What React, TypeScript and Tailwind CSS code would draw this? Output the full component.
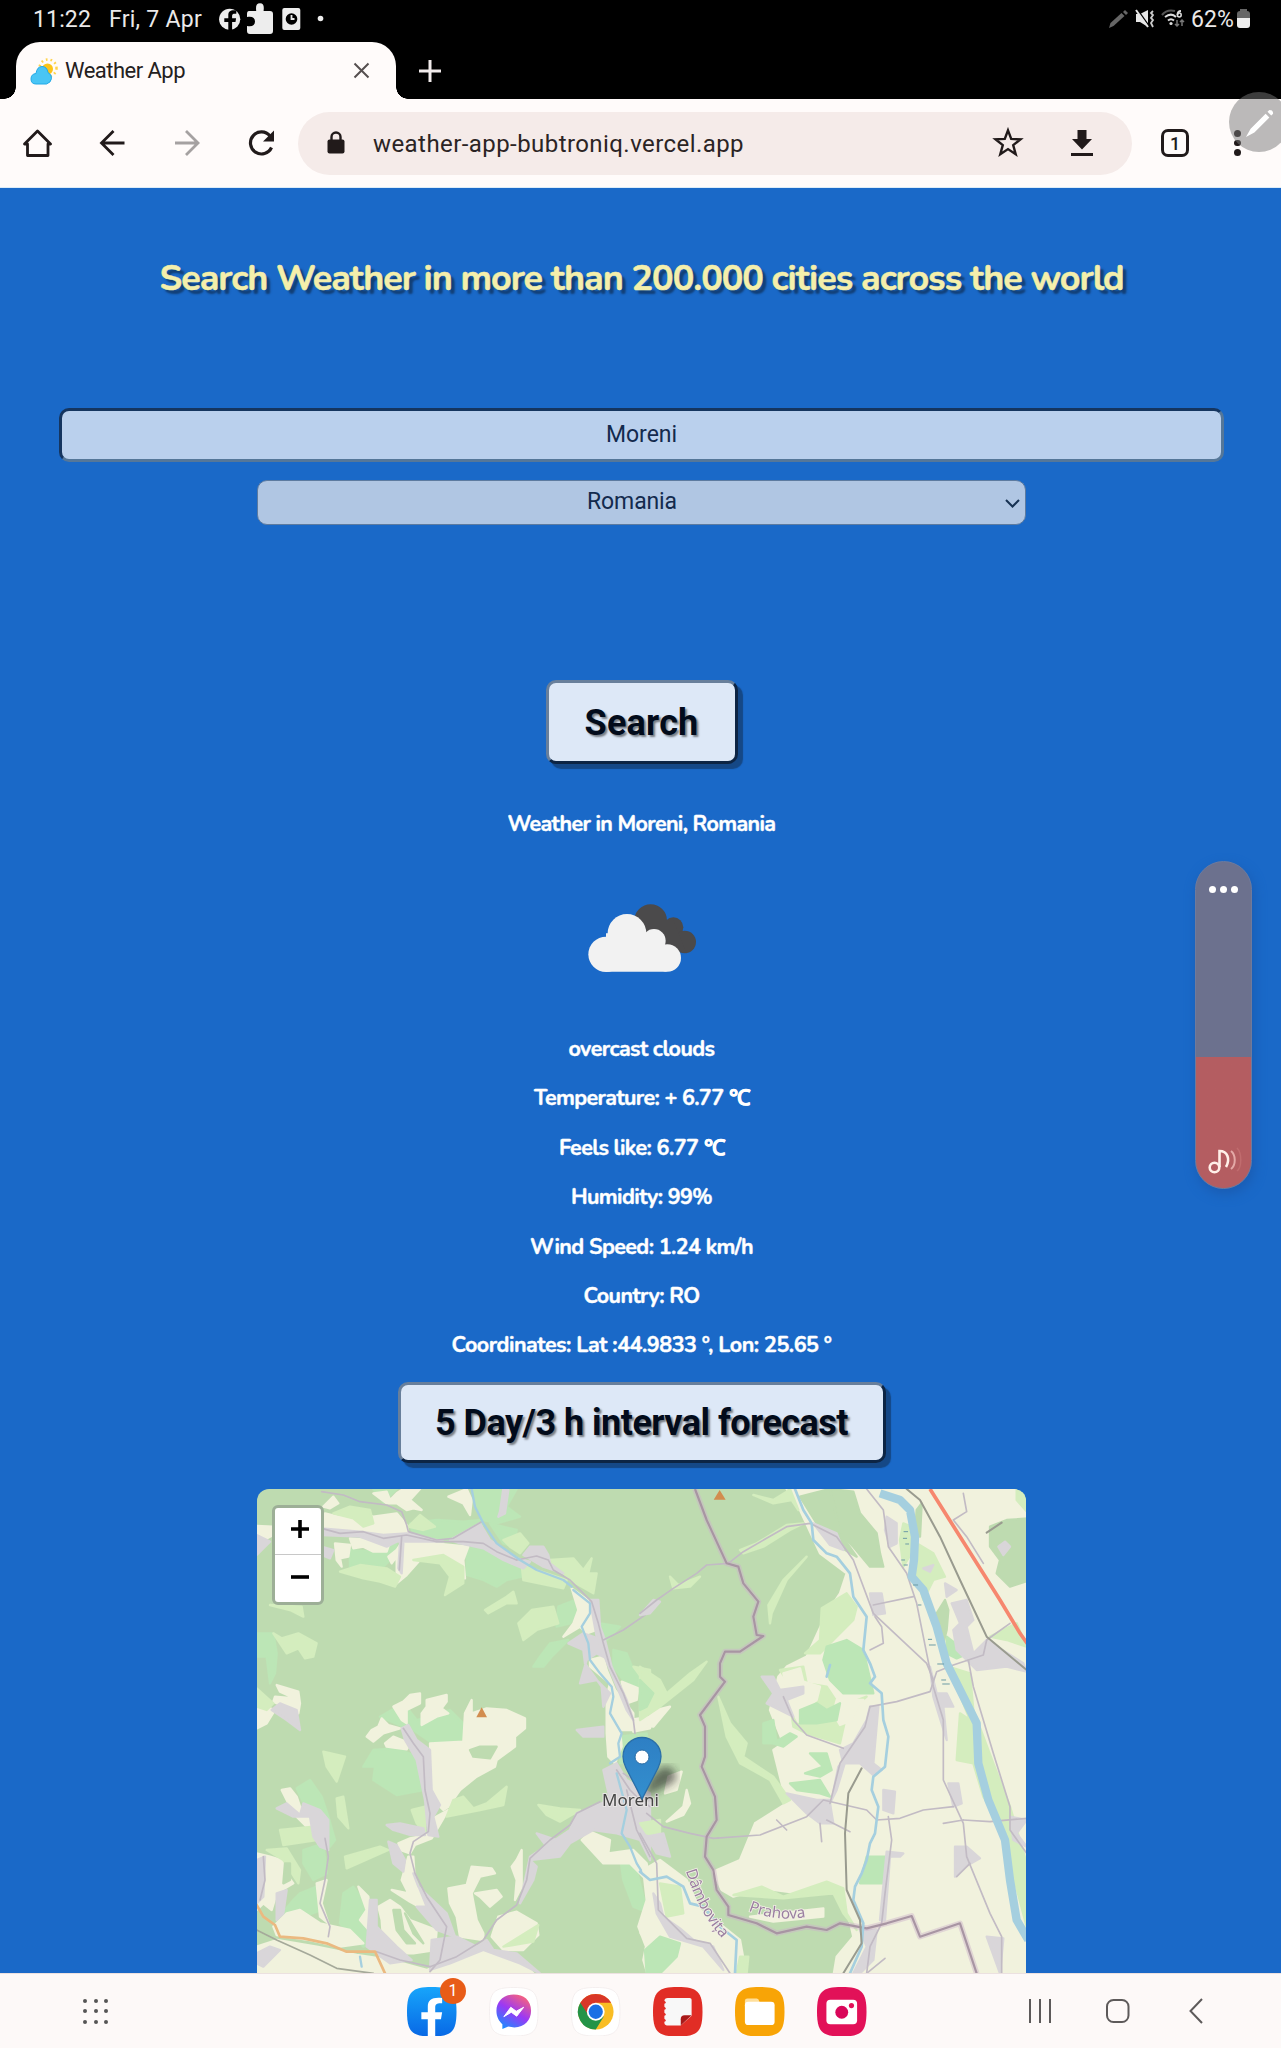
import { useLayoutEffect, useRef, useState, type ReactNode } from "react";

/* Spreads a single line of text over a given width by adjusting its letter spacing. */
function FitText({ width, text, className = "" }: { width: number; text: string; className?: string }) {
  const ref = useRef<HTMLSpanElement>(null);
  const [spacing, setSpacing] = useState(0);
  useLayoutEffect(() => {
    if (!ref.current) return;
    ref.current.style.letterSpacing = "0px";
    const natural = ref.current.getBoundingClientRect().width;
    const next = (width - natural) / text.length;
    ref.current.style.letterSpacing = `${next}px`;
    setSpacing(next);
  }, [width, text]);
  return (
    <span ref={ref} className={`inline-block whitespace-pre ${className}`} style={{ letterSpacing: `${spacing}px` }}>
      {text}
    </span>
  );
}

function StatusBar() {
  return (
    <div className="flex h-[42px] items-start bg-black pt-[4px] text-[23px] leading-[32px] text-[#ebe9e9]">
      <div className="ml-[33px] w-[76px]"><FitText width={58} text="11:22" /></div>
      <div className="w-[108px]"><FitText width={93} text="Fri, 7 Apr" /></div>
      <svg className="mt-[-4px] h-10 w-[110px]" viewBox="217 0 110 40">
        <circle cx="229.7" cy="19.3" r="10.6" fill="#ededed" />
        <path d="M228.3 30v-8h-4v-3.8h4v-3c0-4 2.5-5.4 8-4.7v3.3c-3-.2-4.2 0-4.2 2.3v2.1h4l-.6 3.8h-3.4v8z" fill="#000" />
        <path d="M249 11h7.200c-.6-5 .2-7.700 3.800-7.700s4.200 2.700 3.600 7.700H270q3 0 3 3v17q0 3-3 3h-20q-3 0-3-3v-5c5 1 8-.5 8-4.500s-3-5.500-8-4.500v-3q0-3 2-3z" fill="#ededed" />
        <rect x="282.300" y="8" width="18" height="22" rx="2" fill="#ededed" />
        <circle cx="291.500" cy="19" r="5.800" fill="#000" />
        <path d="M291.500 15v4h3" fill="none" stroke="#ededed" strokeWidth="1.800" />
        <circle cx="320.500" cy="18.500" r="2.800" fill="#ededed" />
      </svg>
      <svg className="mt-[-4px] ml-auto h-10 w-[82px]" viewBox="1106 0 82 40">
        <path d="m1109 28 1.500-5 11-10 3 3-11 10z" fill="#666" />
        <path d="m1123 12 2-2 3 3-2 2z" fill="#666" />
        <path d="M1136 14h4l8-4v17l-8-5h-4z" fill="#e6e6e6" />
        <path d="m1137 9 12 17" stroke="#000" strokeWidth="1.500" />
        <path d="m1136 10 12 17" stroke="#e6e6e6" strokeWidth="2" />
        <path d="M1153 11l-2 2 2 2-2 3 2 2-2 3 2 4" fill="none" stroke="#ccc" strokeWidth="1.800" />
        <path d="M1162 15c4-5 9-5 13-4" fill="none" stroke="#555" strokeWidth="2.200" />
        <path d="M1165 17c4-3 8-3 11 0M1168 20.500c2-1.700 4-1.700 6 0" fill="none" stroke="#ddd" strokeWidth="2" />
        <circle cx="1171" cy="23.500" r="1.600" fill="#ddd" />
        <path d="M1181 11c-3 0-3.500 1.500-3.500 4" fill="none" stroke="#ddd" strokeWidth="1.800" />
        <circle cx="1179.300" cy="15" r="1.900" fill="none" stroke="#ddd" strokeWidth="1.500" />
        <path d="M1177 20v6m-2-2 2 2 2-2M1182 26v-6m-2 2 2-2 2 2" fill="none" stroke="#777" strokeWidth="1.500" />
      </svg>
      <div className="ml-[3px] w-[46px]"><FitText width={43} text="62%" /></div>
      <div className="mt-[5px] mr-[31px] flex w-[13px] flex-col items-center">
        <div className="h-[2px] w-[7px] bg-[#666]" />
        <div className="h-[17px] w-full rounded-[3px] bg-linear-to-b from-[#666] from-40% to-[#eee] to-40%" />
      </div>
    </div>
  );
}

function TabStrip() {
  return (
    <div className="flex h-[57px] bg-black">
      <div className="relative ml-[16px] flex w-[380px] items-center rounded-t-[24px] bg-[#fffbfa] pl-[14px]">
        <div className="absolute bottom-0 -left-[12px] size-[12px] bg-[radial-gradient(circle_at_0_0,#000_11.5px,#fffbfa_12px)]" />
        <div className="absolute -right-[12px] bottom-0 size-[12px] bg-[radial-gradient(circle_at_100%_0,#000_11.5px,#fffbfa_12px)]" />
        <svg className="size-[28px]" viewBox="30 56 28 28">
          <circle cx="48" cy="67" r="8.500" fill="none" stroke="#ffd34d" strokeWidth="2.500" strokeDasharray="1.700 3" />
          <circle cx="47.500" cy="68" r="5.500" fill="#fcc419" />
          <path d="M36 83q-5 0-5-5t5-5.500q1-7 6-7t6 6q4 2 3.500 6t-5 5.500z" fill="#49c5f5" stroke="#22a9e6" strokeWidth="1" />
        </svg>
        <div className="mt-[1px] ml-[7px] text-[22px] leading-none text-[#242020]"><FitText width={120} text="Weather App" /></div>
        <svg className="ml-auto mr-[26px] size-[17px]" viewBox="0 0 17 17"><path d="m1.500 1.500 14 14m0-14-14 14" stroke="#564f4f" strokeWidth="2" /></svg>
      </div>
      <svg className="mt-[17px] ml-[22px] size-[24px]" viewBox="0 0 24 24"><path d="M12 1v22M1 12h22" stroke="#f2ecec" strokeWidth="3" /></svg>
    </div>
  );
}

const ink = "#211a1a";

function Toolbar() {
  return (
    <div className="flex h-[89px] items-center border-b border-[#dcecf8] bg-[#fffbfa]">
      <svg className="ml-[22px] size-[30px]" viewBox="22 128 30 30"><path d="M24.500 144 37.500 131 50.500 144H48v11.500H27.500V144z" fill="none" stroke={ink} strokeWidth="2.800" strokeLinejoin="round" /></svg>
      <svg className="ml-[45px] size-[30px]" viewBox="97 128 30 30"><path d="M124.500 143H102m11.500-12-12 12 12 12" fill="none" stroke={ink} strokeWidth="2.800" /></svg>
      <svg className="ml-[45px] size-[30px]" viewBox="172 128 30 30"><path d="M175 143h22.500m-11.500-12 12 12-12 12" fill="none" stroke="#a5a1a1" strokeWidth="2.800" /></svg>
      <svg className="ml-[44px] size-[30px]" viewBox="246 128 30 30"><path d="M271.500 147.500a11 11 0 1 1-1.500-11.500" fill="none" stroke={ink} strokeWidth="3.200" /><path d="M274 130.500v11h-11z" fill={ink} /></svg>
      <div className="ml-[22px] flex h-[63px] w-[834px] items-center rounded-full bg-[#f5ebe9]">
        <svg className="ml-[28px] h-[24px] w-[20px]" viewBox="0 0 20 24"><rect x="1.500" y="8.500" width="17" height="14" rx="2" fill={ink} /><path d="M5.500 9V6a4.500 4.500 0 0 1 9 0v3" fill="none" stroke={ink} strokeWidth="2.400" /></svg>
        <div className="mt-[1px] ml-[27px] text-[24px] leading-none text-[#2b2424]"><FitText width={371} text="weather-app-bubtroniq.vercel.app" /></div>
        <svg className="mr-[47px] ml-auto size-[32px]" viewBox="0 0 32 32"><path d="m16 3.300 3.200 8.600 9.300.4-7.300 5.800 2.500 9.200-7.700-5.200-7.700 5.200 2.500-9.200-7.300-5.800 9.300-.4z" fill="none" stroke={ink} strokeWidth="2.400" /></svg>
        <svg className="mr-[39px] h-[28px] w-[22px]" viewBox="0 0 22 28"><path d="M6.500 1h9v9H21L11 20.500 1 10h5.500z" fill={ink} /><path d="M0 25.500h22" stroke={ink} strokeWidth="3" /></svg>
      </div>
      <div className="ml-[29px] flex size-[28px] items-center justify-center rounded-[7px] border-3 border-[#211a1a] text-[18px] font-medium text-[#211a1a]">1</div>
      <div className="ml-[45px] flex flex-col gap-[3px]">
        <i className="size-[6.5px] rounded-full bg-[#211a1a]" />
        <i className="size-[6.5px] rounded-full bg-[#211a1a]" />
        <i className="size-[6.5px] rounded-full bg-[#211a1a]" />
      </div>
    </div>
  );
}

const FOREST = "#bedbb0";
const FIELD = "#f1f2dd";
const GRASS = "#d4edbe";
const SCRUB = "#bce6b6";
const TOWN = "#d9d6d9";
const ROAD = "#c2bbc4";
const RIVER = "#a5cfdf";

function Shapes({ fill, list }: { fill: string; list: string[] }) {
  return <>{list.map((d) => <path key={d} d={d} fill={fill} stroke={fill} strokeWidth="7" strokeLinejoin="round" />)}</>;
}
function Lines({ stroke, w, list }: { stroke: string; w: number; list: string[] }) {
  return <>{list.map((d) => <path key={d} d={d} fill="none" stroke={stroke} strokeWidth={w} strokeLinejoin="round" strokeLinecap="round" />)}</>;
}

function WesternHalf() {
  return (
    <g transform="translate(250 1480) scale(.333333)">
      <Shapes fill={SCRUB} list={[
        "M370 27h70l-40 40z",
        "M480 130 560 120 640 125 690 120 700 135 600 180 490 165Z",
        "M670 27 800 27 770 80 810 110 740 130 700 120 675 80Z",
        "M720 130 800 150 790 200 760 190Z",
        "M650 205 720 200 815 255 815 290 770 300 740 320 700 300 650 285Z",
        "M300 210 370 215 440 190 430 230 400 260 350 250 300 260Z",
        "M925 380 975 360 985 390 960 430 920 440Z",
        "M955 480 900 490 870 530 850 560 880 560 905 530Z",
        "M1050 430 1110 440 1070 480Z",
        "M1090 510 1130 520 1150 570 1200 580 1200 660 1160 620 1120 600 1090 560Z",
        "M20 460 70 460 80 520 75 580 60 610 50 530 20 530Z",
        "M390 710 460 670 500 720 600 690 640 730 640 785 540 785 490 750 460 740Z",
        "M370 810 440 805 500 830 520 850 520 930 440 945 370 900 375 860 340 860Z",
        "M140 925 180 900 215 950 235 1010 255 1080 240 1100 210 1030 170 990Z",
        "M160 1110 220 1090 230 1180 190 1200 160 1150Z",
        "M150 1240 200 1220 215 1290 160 1310 100 1330 80 1320 130 1260Z",
        "M280 1240 310 1220 345 1270 345 1340 370 1390 340 1400 270 1330Z",
        "M1110 770 1190 760 1200 830 1110 850Z",
        "M1110 1130 1155 1150 1180 1250 1200 1300 1150 1280 1120 1200Z",
      ]} />
      <Shapes fill={FIELD} list={[
        "M220 80 250 50 265 70 240 85Z",
        "M370 40 410 35 420 60 440 40 460 27 510 27 480 60 515 90 490 85 470 90 440 70 410 70Z",
        "M595 50 650 27 665 60 660 105 640 70Z",
        "M215 150 225 100 265 110 310 95 370 110 440 100 470 135 475 160 430 170 350 160 280 150Z",
        "M20 138 68 140 70 165 50 175 20 170Z",
        "M255 190 300 195 295 230 270 235 275 260 260 240Z",
        "M300 175 420 185 410 215 370 215 340 200 310 205Z",
        "M460 180 600 195 655 200 640 240 645 295 625 295 615 250 560 235 510 240 470 285 440 310 440 230 425 250 415 230 440 210Z",
        "M965 325 1020 365 1025 400 1040 450 1010 460 990 440 940 470 970 430 985 390Z",
        "M1020 540 1060 530 1070 570 1095 630 1150 700 1150 750 1110 750 1115 800 1095 850 1075 830 1070 760 1070 650 1080 610 1020 560Z",
        "M1115 605 1165 625 1160 660 1130 670Z",
        "M80 615 145 635 150 670 145 700 70 665 75 650 135 655 90 635Z",
        "M20 670 75 690 50 730 20 745Z",
        "M350 770 365 750 385 740 395 715 415 735 450 745 400 760 370 785Z",
        "M405 790 430 770 480 790 470 808 410 800Z",
        "M430 680 460 665 480 645 510 640 510 670 470 690 470 730 455 720Z",
        "M515 700 530 680 530 660 590 645 590 665 575 685 595 700 560 710 515 735Z",
        "M540 790 640 785 645 700 665 660 665 700 710 685 770 690 825 715 825 745 795 770 795 800 740 840 735 860 680 890 630 930 595 980 580 990 560 970 545 925Z",
        "M95 930 120 925 140 950 150 980 190 1020 220 1075 205 1090 190 1060 130 1000Z",
        "M445 1090 480 1075 530 1065 550 1015 595 990 545 1075 495 1095 480 1120 450 1110Z",
        "M425 1230 475 1240 455 1200 475 1130 490 1130 495 1210 535 1275 525 1290 480 1265Z",
        "M20 1120 60 1130 95 1140 110 1145 115 1190 130 1210 80 1240 65 1290 40 1270 20 1290Z",
        "M110 1300 150 1290 210 1330 300 1350 340 1390 270 1400 180 1380 80 1365 70 1340Z",
        "M200 1210 230 1200 215 1270 235 1330 210 1310Z",
        "M325 1220 355 1250 365 1360 330 1320 350 1290Z",
        "M385 1280 420 1260 450 1280 480 1320 560 1350 555 1410 490 1420 440 1420 400 1390 395 1320Z",
        "M595 1225 650 1215 665 1160 725 1165 735 1180 690 1190 665 1240 680 1320 700 1360 700 1380 630 1370 620 1310 600 1270Z",
        "M675 1240 740 1230 755 1250 720 1280 690 1250Z",
        "M800 1140 815 1110 815 1220 795 1260 800 1200 785 1160Z",
        "M725 1370 745 1310 800 1295 860 1330 865 1365 820 1410 760 1410Z",
        "M20 1400 80 1380 200 1400 320 1425 420 1440 530 1470 600 1440 700 1410 800 1430 850 1480 20 1480Z",
        "M995 1080 1020 1055 1080 1080 1075 1120 1150 1110 1190 1150 1200 1210 1140 1150 1060 1150Z",
        "M1200 1200 1198 1260 1170 1330 1172 1360 1200 1400Z",
        "M1140 720 1200 710 1200 745 1150 755Z",
      ]} />
      <Shapes fill={GRASS} list={[
        "M250 100 300 80 360 90 370 130 340 140 310 115Z",
        "M475 140 510 105 555 140 520 150Z",
        "M760 180 810 160 835 190 810 220 780 200Z",
        "M270 275 330 255 410 265 450 290 435 320 390 305 340 295Z",
        "M490 240 580 225 640 260 640 310 585 345 600 290 570 250Z",
        "M815 255 950 300 940 325 820 300Z",
        "M900 240 970 235 1000 270 1025 235 1015 280 1040 280 1030 340 960 300Z",
        "M705 390 770 350 790 335 800 370 770 370 715 400Z",
        "M805 430 845 390 910 380 925 430 860 450 820 480Z",
        "M70 460 95 475 145 460 200 490 190 530 165 535 145 505 110 520Z",
        "M60 375 155 380 160 410 120 390Z",
        "M220 815 285 830 260 905 230 860Z",
        "M260 955 280 950 295 1045 265 1010Z",
        "M90 1050 190 1040 200 1080 100 1095Z",
        "M50 1110 110 1105 150 1170 145 1210 100 1140Z",
        "M285 1130 390 1100 415 1110 290 1165Z",
        "M485 990 525 980 525 1060 500 1030Z",
        "M590 1010 610 960 640 950 670 985 710 970 770 920 760 975 690 990Z",
        "M865 975 930 985 990 990 930 1025 890 1005Z",
        "M760 1400 865 1335 850 1385Z",
        "M20 625 70 670 50 690 20 680Z",
        "M1150 560 1200 570 1200 630 1180 600Z",
        "M1170 1040 1200 1020 1200 1070Z",
      ]} />
      <Shapes fill={FOREST} list={[
        "M660 810 690 800 740 800 720 835 670 830Z",
        "M430 1290 450 1290 460 1350 495 1390 470 1390 440 1350Z",
        "M465 1300 520 1390 490 1360Z",
        "M105 1150 120 1150 120 1200 100 1210Z",
      ]} />
      <Shapes fill={TOWN} list={[
        "M20 165 60 185 20 225Z",
        "M215 145 330 155 400 165 470 160 580 185 440 185 410 200 330 170 215 165Z",
        "M215 200 250 210 240 235 215 225Z",
        "M450 190 460 190 455 280 445 265Z",
        "M600 180 690 130 720 180 800 235 840 245 820 265 760 240 700 205 630 190Z",
        "M750 95 760 27 775 30 765 100 745 110Z",
        "M820 225 840 200 880 200 895 225 900 250 940 280 880 260Z",
        "M955 490 1000 460 1060 480 1080 540 1040 520 1010 540 990 610 1040 600 1080 640 1060 680 1055 620 1005 550 1000 510Z",
        "M1020 360 1045 360 1050 440 1065 480 1085 560 1130 660 1150 720 1130 690 1080 570 1040 470Z",
        "M65 690 90 670 140 690 150 750 110 720Z",
        "M455 745 475 735 500 780 540 810 545 930 570 975 550 1010 565 1070 535 1065 525 960 500 840 465 780Z",
        "M410 1035 450 1030 520 1045 525 1065 480 1065 430 1050Z",
        "M415 1085 440 1095 465 1140 460 1175 430 1150Z",
        "M490 1180 505 1220 590 1300 615 1370 560 1350 500 1280 530 1280Z",
        "M80 985 110 970 150 1005 160 970 210 990 235 1020 235 1110 210 1100 190 1070 180 1010 130 1010Z",
        "M80 1240 110 1230 100 1300 80 1320Z",
        "M360 1260 380 1260 380 1340 440 1400 485 1440 420 1450 350 1400Z",
        "M20 1140 45 1130 40 1250 20 1270Z",
        "M545 1380 620 1370 680 1400 710 1380 730 1410 800 1420 870 1480 810 1450 700 1410 600 1450 540 1470Z",
        "M980 750 1060 740 1060 770 1000 770Z",
        "M1060 870 1100 850 1130 900 1200 940 1200 1140 1170 1080 1100 1060 1030 1050 960 1090 930 1130 840 1140 860 1160 850 1200 810 1270 840 1130 960 1050 980 1000 1080 960Z",
        "M860 1060 920 1080 890 1100Z",
        "M20 1420 60 1400 90 1410 40 1460 20 1450Z",
      ]} />
      <Lines stroke={ROAD} w={5} list={[
        "M215 35 280 45 330 65 410 75 455 95 470 135 475 155 560 180 610 175 695 125",
        "M215 145 270 160 340 155 400 175 470 165 560 185 640 185 700 190 740 215 800 240",
        "M455 170 448 270",
        "M800 240 860 228 895 240 910 270 960 300 1025 365 1045 430 1060 490 1080 560 1120 640 1150 720 1155 760",
        "M1060 480 1120 450 1200 395",
        "M460 745 490 790 520 830 525 930 540 1000 535 1055 490 1085 480 1120 495 1180 530 1250 590 1340 570 1440 540 1475",
        "M540 1460 620 1430 700 1380 740 1320 800 1275 830 1200 840 1135 900 1080 960 1035 980 1000 1050 965",
        "M225 1075 235 1130 225 1200 210 1270 240 1340 235 1370",
        "M380 1415 450 1440 540 1460",
        "M40 1130 45 1200 30 1260",
        "M1130 930 1160 1050 1200 1130",
        "M1100 870 1140 930 1170 960 1200 980",
        "M1120 880 1150 900 1170 950",
      ]} />
      <Lines stroke={RIVER} w={7} list={[
        "M665 27 675 80 700 130 740 190 810 240 860 270 940 300 965 320",
        "M970 330 1020 370 1020 400 995 440 1015 490 1020 540 1050 580 1085 620 1090 650 1080 700 1115 760 1105 790 1110 830 1080 850",
        "M1100 880 1130 990 1115 1060 1140 1100 1160 1150 1185 1190 1200 1200",
        "M330 1430 335 1460",
      ]} />
      <Lines stroke="#ebb980" w={8} list={["M20 1275 40 1310 75 1335 90 1370 160 1375 230 1390 290 1415 375 1415 405 1480"]} />
      <Lines stroke="#a5a99a" w={5} list={["M20 1350 80 1380 180 1425 260 1465 370 1480"]} />
      <path d="m695 682 16 30h-32z" fill="#d28d50" />
    </g>
  );
}

const BORDER = "M165 27 200 120 260 250 295 260 310 310 355 365 340 410 350 465 370 468 300 515 255 515 240 550 240 590 255 605 180 705 195 740 195 830 185 860 225 950 230 1020 200 1070 195 1130 220 1170 230 1230 265 1280 265 1305 350 1330 410 1360 500 1340 560 1350 600 1330 680 1345 740 1330 815 1308 840 1370 960 1330 1010 1480";

function EasternHalf() {
  return (
    <g transform="translate(640 1480) scale(.333333)">
      <Shapes fill={FIELD} list={[
        "M440 27 1170 27 1170 1490 580 1490 590 1430 640 1370 610 1240 480 1240 365 1225 280 1250 245 1230 220 1175 300 1140 345 1030 440 970 420 890 400 810 430 790 390 690 415 590 440 560 500 530 560 400 600 340 620 280 540 220 480 90Z",
        "M10 1170 60 1140 140 1200 180 1290 250 1340 300 1380 320 1490 25 1490 10 1440 18 1400 -5 1340 20 1260Z",
        "M0 735 50 690 90 680 40 740Z",
        "M80 1025 130 980 140 930 150 970 130 1005Z",
        "M330 1310 550 1285 550 1310 400 1325Z",
        "M75 940 85 890 125 875 110 930Z",
      ]} />
      <Shapes fill={GRASS} list={[
        "M340 45 400 60 440 35 450 27 475 90 455 60 400 70Z",
        "M545 385 620 340 650 380 640 420 590 470 540 520 495 520 540 480Z",
        "M0 560 60 600 80 640 150 580 200 545 160 600 60 680 0 720Z",
        "M235 650 270 730 320 790 310 830 400 890 450 960 430 970 390 900 300 850 260 770Z",
        "M385 375 430 300 500 230 440 300 395 400 390 430Z",
        "M90 290 115 315 180 290 150 320 100 325Z",
        "M300 210 350 190 440 135 490 130 450 150 370 200 310 220Z",
        "M830 190 880 220 915 290 880 300 850 360 830 290Z",
        "M420 570 490 560 500 610 560 620 600 680 680 650 620 700 600 790 500 760 460 740 440 600Z",
        "M925 560 990 580 1000 690 1060 850 1110 980 1160 1150 1160 1340 1110 1150 1080 1030 1030 950 1000 850 950 840 960 700 990 720Z",
        "M280 1245 365 1220 430 1250 560 1205 610 1225 620 1300 650 1350 610 1300 580 1240 430 1255Z",
        "M1050 470 1130 430 1160 500 1100 480Z",
        "M790 130 815 140 820 210 790 260 780 180Z",
        "M60 1210 120 1220 130 1300 80 1310Z",
        "M0 1030 60 1020 60 1070 20 1060Z",
        "M300 1430 325 1430 320 1480 290 1480Z",
        "M530 980 570 970 570 1010 530 1010Z",
      ]} />
      <Shapes fill={FIELD} list={[
        "M430 580 480 565 490 605 540 620 530 660 490 690 475 725 450 680Z",
        "M590 660 670 660 640 720 600 735 580 700Z",
      ]} />
      <Shapes fill={SCRUB} list={[
        "M0 600 40 640 20 680 0 690Z",
        "M560 500 620 480 670 510 700 640 610 640 570 600 550 540Z",
        "M480 690 530 670 560 690 600 670 590 720 530 730 480 730Z",
        "M370 730 400 720 410 790 370 790Z",
        "M470 770 430 800 400 790 450 760Z",
        "M510 820 560 820 575 870 540 890 495 880 550 860Z",
        "M450 910 540 900 570 950 540 940 470 930Z",
        "M660 1210 680 1130 740 1130 730 1210Z",
        "M15 1410 60 1370 120 1390 110 1430 60 1480 20 1480Z",
        "M920 470 985 520 950 535 920 520Z",
      ]} />
      <Shapes fill={FOREST} list={[
        "M570 27 640 35 660 100 710 160 720 220 730 260 690 260 640 200 600 160 590 100Z",
        "M480 50 570 27 600 160 650 230 590 195 530 130Z",
        "M1050 200 1050 140 1100 120 1170 115 1170 300 1110 320 1070 280 1080 240Z",
        "M830 90 845 70 840 170 825 160Z",
        "M915 360 925 390 920 450 910 490 890 400Z",
      ]} />
      <Shapes fill={GRASS} list={["M1130 27 1165 27 1165 100 1130 60Z"]} />
      <Shapes fill={TOWN} list={[
        "M365 590 400 590 420 630 490 620 490 640 440 660 460 710 400 680 380 670 400 640Z",
        "M520 130 590 160 610 210 570 195Z",
        "M740 110 770 130 770 190 750 200 735 150Z",
        "M690 340 725 340 735 400 700 405Z",
        "M850 265 880 255 870 275Z",
        "M935 370 980 360 1000 420 980 440 1000 520 1040 480 1150 550 1160 575 1100 560 1010 570 950 510 940 450 960 430Z",
        "M915 310 950 330 920 350Z",
        "M1075 200 1095 185 1110 200 1090 225Z",
        "M690 680 715 680 700 850 725 870 700 885 660 850 610 850 600 810 640 790 680 720Z",
        "M595 860 620 830 590 930 570 970 580 1030 540 1030 500 1000 440 940 530 960 575 960Z",
        "M730 930 765 935 760 1000 730 990Z",
        "M870 560 890 640 920 640 940 680 910 680 920 780 880 650Z",
        "M925 910 955 910 965 970 940 980Z",
        "M945 1100 980 1100 1020 1135 975 1160 945 1190Z",
        "M740 1115 790 1120 780 1130 750 1130 735 1320 720 1320Z",
        "M20 1070 70 1060 90 1130 50 1120Z",
        "M40 1240 60 1270 70 1310 120 1345 160 1380 220 1400 250 1470 190 1400 90 1370 50 1300Z",
        "M1110 1010 1160 1020 1130 1060 1160 1100 1120 1080Z",
        "M1040 1370 1090 1375 1080 1480Z",
        "M660 1350 710 1350 700 1440 660 1480 640 1480 680 1400Z",
        "M0 405 40 360 60 365 30 400Z",
      ]} />
      <Lines stroke={ROAD} w={5} list={[
        "M0 400 50 360 100 325 170 280 200 255 265 250 310 215 440 140 510 130 590 170 640 240 700 400 860 550 880 600",
        "M680 27 730 90 745 200 800 280 830 370 860 520 880 620 910 720 910 900 970 1030 980 1130 1050 1300 1085 1370 1085 1480",
        "M700 375 820 350",
        "M705 410 725 440 730 490 690 510",
        "M690 680 770 665 870 635 890 575 940 555 1030 525 1040 480 1110 430",
        "M690 680 675 740 600 850 570 970",
        "M430 650 460 720 500 765 610 805",
        "M20 1000 70 1040 150 1060 220 1075 360 1065 500 1010 550 960 680 990 710 1020 780 1015 850 990 940 980",
        "M745 1010 755 1080 735 1240 725 1330 690 1400 680 1480",
        "M970 1020 1050 1025 1160 1015",
        "M985 540 1000 620 1060 820 1110 980 1110 1050 1160 1120",
        "M0 1060 50 1150 55 1290 140 1375 210 1390 270 1480",
        "M970 40 980 95 940 120 980 170 1030 250",
        "M410 1020 440 1050M540 1030 545 1085M560 1020 630 1055",
        "M910 1030 970 1020M950 1190 990 1150M680 1480 735 1435",
      ]} />
      <path d={BORDER} fill="none" stroke="#cdb2c9" strokeOpacity=".45" strokeWidth="17" strokeLinejoin="round" />
      <path d={BORDER} fill="none" stroke="#a895a3" strokeWidth="6.500" strokeLinejoin="round" />
      <Lines stroke={RIVER} w={8} list={[
        "M465 27 490 90 515 130 520 180 560 220 590 230 630 280 640 350 680 410 670 510 690 550 705 590 690 610 725 640 730 720 745 770 735 860 700 890 695 930 715 980 705 1060 690 1090 680 1140 665 1180 645 1220 640 1260 670 1330 665 1400 630 1480",
        "M0 1175 30 1200 80 1190 130 1220 150 1270 190 1280 240 1340 290 1380 285 1480",
        "M560 590 570 555",
      ]} />
      <path d="M720 40 780 60 810 90 825 170 822 240 815 290 850 330 890 440 920 550 970 650 1010 730 1015 850 1045 960 1095 1080 1110 1200 1130 1320 1165 1380" fill="none" stroke={RIVER} strokeWidth="25" strokeLinejoin="round" />
      <Lines stroke="#6b9ba5" w={3} list={["M792 155h11M790 175h10M797 192h9M785 240h9M792 255h10M820 315h13M835 375h8M865 478h10M868 495h18M893 552h18M905 600h12M908 612h20"]} />
      <Lines stroke="#999b8f" w={6} list={[
        "M800 27 840 60 900 170 960 300 1040 470 1160 570",
        "M665 865 625 940 615 1060 620 1230 660 1320 665 1390 610 1480",
        "M1040 158 1085 128",
      ]} />
      <path d="M870 27 1080 360 1140 460 1165 495" fill="none" stroke="#f6876e" strokeWidth="11" />
      <path d="m239 30 18 29h-36z" fill="#d28d50" />
      <path id="west-county" d="M137 1172C165 1260 190 1310 250 1380" fill="none" />
      <path id="east-county" d="M325 1292Q420 1330 515 1308" fill="none" />
      <g fill="#9a7fa0" stroke="#f2f0e5" strokeWidth="5" paintOrder="stroke" fontSize="46" fontFamily="Noto Sans, sans-serif">
        <text textLength="232"><textPath href="#west-county">Dâmbovița</textPath></text>
        <text textLength="176"><textPath href="#east-county">Prahova</textPath></text>
      </g>
    </g>
  );
}

function WeatherMap() {
  return (
    <div className="relative mt-[26px] h-[484px] w-[769px] overflow-hidden rounded-t-[12px]">
      <svg className="block size-full" viewBox="257 1489 769 484">
        <defs>
          <linearGradient id="pin" x2="0" y2="1"><stop stopColor="#2e7fc4" /><stop offset="1" stopColor="#338fce" /></linearGradient>
          <filter id="soft"><feGaussianBlur stdDeviation="4" /></filter>
          <filter id="tiles"><feGaussianBlur stdDeviation="0.6" /></filter>
        </defs>
        <rect x="257" y="1489" width="769" height="484" fill={FOREST} />
        <g filter="url(#tiles)">
          <WesternHalf />
          <EasternHalf />
          <text x="602" y="1806" textLength="57" fontSize="17" fontFamily="Noto Sans, sans-serif" fill="#444" stroke="#e8e5e5" strokeWidth="2" paintOrder="stroke">Moreni</text>
        </g>
        <path d="M643 1798 650 1779Q664 1760 673 1770T666 1786Z" fill="#222" opacity=".6" filter="url(#soft)" />
        <path d="M642 1799 626 1768Q623 1762 623 1756.500A19 19 0 0 1 661 1756.500Q661 1762 658 1768Z" fill="url(#pin)" stroke="#2a6ea8" strokeWidth="1.300" />
        <circle cx="642" cy="1757" r="7" fill="#fff" stroke="#286ba4" strokeWidth="1" />
      </svg>
      <div className="absolute top-[16px] left-[15px] flex h-[100px] w-[52px] flex-col rounded-[6px] border-[3px] border-[#9daf97] bg-white">
        <div className="flex flex-1 items-center justify-center border-b border-[#c8c8c8]"><svg className="mb-[3px] ml-[4px] size-[18px]" viewBox="0 0 18 18"><path d="M9 0v18M0 9h18" stroke="#000" strokeWidth="3.600" /></svg></div>
        <div className="flex flex-1 items-center justify-center"><svg className="mb-[3px] ml-[4px] size-[18px]" viewBox="0 0 18 18"><path d="M0 9h18" stroke="#000" strokeWidth="3.600" /></svg></div>
      </div>
    </div>
  );
}

const readings = [
  { text: "overcast clouds", width: 146 },
  { text: "Temperature: + 6.77 ℃", width: 215 },
  { text: "Feels like: 6.77 ℃", width: 165 },
  { text: "Humidity: 99%", width: 141 },
  { text: "Wind Speed: 1.24 km/h", width: 223 },
  { text: "Country: RO", width: 116 },
  { text: "Coordinates: Lat :44.9833 °, Lon: 25.65 °", width: 380 },
];

function PushButton({ children, className }: { children: ReactNode; className: string }) {
  return (
    <button className={`rounded-[10px] border-[3px] border-t-[#687f9b] border-r-[#0d2544] border-b-[#0d2544] border-l-[#687f9b] bg-[#dde8f7] pt-[2px] text-[36px] leading-none font-bold text-[#020b1b] shadow-[5px_5px_1px_#154886] [text-shadow:2px_2px_2px_#0007] ${className}`}>
      {children}
    </button>
  );
}

function WeatherPage() {
  return (
    <main className="flex h-[1785px] flex-col items-center overflow-hidden bg-[#1a69c8] pl-[2px]">
      <h1 className="mt-[67px] h-[48px] font-[Nunito,Lato,sans-serif] text-[36px] leading-[48px] font-bold text-[#f4efab] [-webkit-text-stroke:0.5px_#f4efab] [text-shadow:4px_4px_2px_#123f76]">
        <FitText width={964} text="Search Weather in more than 200.000 cities across the world" />
      </h1>
      <div className="mt-[105px] flex h-[54px] w-[1165px] items-center justify-center rounded-[10px] border-[3px] border-t-[#15355f] border-r-[#557799] border-b-[#557799] border-l-[#15355f] bg-[#bad0ed] text-[23px] text-[#132a4d]">
        <FitText width={71} text="Moreni" />
      </div>
      <div className="relative mt-[18px] flex h-[45px] w-[769px] items-center justify-center rounded-[10px] border border-[#5d7ba0] bg-[#b0c6e3] pr-[19px] text-[23px] text-[#132a4d]">
        <FitText width={90} text="Romania" />
        <svg className="absolute top-[18px] right-[5px] h-[9px] w-[15px]" viewBox="0 0 15 9"><path d="m1 1 6.500 6.500L14 1" fill="none" stroke="#173253" strokeWidth="2" /></svg>
      </div>
      <PushButton className="mt-[155px] h-[84px] w-[192px]"><FitText width={114} text="Search" /></PushButton>
      <div className="mt-[35px] font-[Nunito,Lato,sans-serif] text-[21.5px] leading-[50px] font-bold text-white [-webkit-text-stroke:0.4px_white]">
        <FitText width={268} text="Weather in Moreni, Romania" />
      </div>
      <svg className="h-[175px] w-[130px]" viewBox="577 849 130 175">
        <g transform="translate(480 660) scale(.333333)">
          <g fill="#4b4a4b"><circle cx="512" cy="782" r="49" /><circle cx="580" cy="802" r="30" /><circle cx="614" cy="846" r="34" /><path d="M500 780h80l40 100-80-20z" /></g>
          <g fill="#f2f2f2"><circle cx="441" cy="820" r="58" /><circle cx="378" cy="883" r="53" /><circle cx="522" cy="842" r="35" /><circle cx="562" cy="894" r="41" /><path d="M378 820H520l40 50v65H378z" /></g>
        </g>
      </svg>
      <div className="mt-[1px] flex flex-col items-center font-[Nunito,Lato,sans-serif] text-[21.5px] font-bold text-white [-webkit-text-stroke:0.4px_white]">
        {readings.map((r) => (
          <p key={r.text} className="h-[49.4px] leading-[49.4px]"><FitText width={r.width} text={r.text} /></p>
        ))}
      </div>
      <PushButton className="mt-[11px] h-[81px] w-[488px]"><FitText width={413} text="5 Day/3 h interval forecast" /></PushButton>
      <WeatherMap />
    </main>
  );
}

function NavigationBar() {
  return (
    <nav className="flex h-[75px] items-center border-t border-[#ece1e0] bg-[#fdf9f8]">
      <div className="ml-[83px] grid grid-cols-3 gap-[6.5px]">
        {[...Array(9).keys()].map((n) => <i key={n} className="size-[4px] rounded-full bg-[#555]" />)}
      </div>
      <div className="mt-[1px] ml-[299px] flex gap-[32.5px]">
        <div className="relative size-[49.5px] overflow-visible">
          <svg className="size-full" viewBox="0 0 50 50">
            <defs><linearGradient id="fb" x2="0" y2="1"><stop stopColor="#17a5fb" /><stop offset="1" stopColor="#0868e5" /></linearGradient></defs>
            <path d="M0 25C0 5 5 0 25 0s25 5 25 25-5 25-25 25S0 45 0 25" fill="url(#fb)" />
            <path d="M21 50V32.500h-6.500V25.500H21v-5.500c0-7.500 4.500-10 14.500-9V16.500c-5-.3-7 .5-7 4.500v4.500h7l-1.200 7h-5.800V50z" fill="#fff" />
          </svg>
          <div className="absolute -top-[9px] left-[33px] flex size-[26px] items-center justify-center rounded-full bg-[#e85c17] text-[16px] text-white">1</div>
        </div>
        <svg className="size-[49.5px]" viewBox="0 0 50 50">
          <defs><linearGradient id="ms" x1=".2" y1="1" x2=".8" y2="0"><stop stopColor="#168fff" /><stop offset=".5" stopColor="#9b38f5" /><stop offset="1" stopColor="#ff6674" /></linearGradient></defs>
          <path d="M.5 25C.5 5 5 .5 25 .5S49.500 5 49.500 25 45 49.500 25 49.500.5 45 .5 25" fill="#fff" stroke="#f4efef" />
          <path d="M25 7.500c-10 0-17.500 7-17.500 16.500 0 6 2.500 10.500 6 13.500v5l6-2.500c14 3.500 23-5 23-16S35 7.500 25 7.500" fill="url(#ms)" />
          <path d="m15 30 7-9.500 5.500 4 7.500-4-7 9-5.500-4z" fill="#fff" stroke="#fff" strokeWidth="1" />
        </svg>
        <svg className="size-[49.5px]" viewBox="0 0 50 50">
          <path d="M.5 25C.5 5 5 .5 25 .5S49.500 5 49.500 25 45 49.500 25 49.500.5 45 .5 25" fill="#fff" stroke="#f4efef" />
          <circle cx="25" cy="25" r="18" fill="#f9bd24" />
          <path d="M25 25 9.400 16a18 18 0 0 0 15.600 27l8-13z" fill="#249347" />
          <path d="M9.400 16a18 18 0 0 1 31.200 0H25l-7 13z" fill="#d93728" />
          <circle cx="25" cy="25" r="9" fill="#fff" /><circle cx="25" cy="25" r="7.200" fill="#1a70e5" />
        </svg>
        <svg className="size-[49.5px]" viewBox="0 0 50 50">
          <path d="M0 25C0 5 5 0 25 0s25 5 25 25-5 25-25 25S0 45 0 25" fill="#e12d25" />
          <path d="M15 11h22q2 0 2 2v16L28 39H14q-3-1-2.500-4 3-1 0-3v-3q3-1 0-3v-3q3-1 0-3v-3q3-1 0-3 0-3 3.500-3" fill="#f8f8f8" />
          <path d="M39 28.500h-7q-4 0-4 4V39z" fill="#a91919" />
        </svg>
        <svg className="size-[49.5px]" viewBox="0 0 50 50">
          <path d="M0 25C0 5 5 0 25 0s25 5 25 25-5 25-25 25S0 45 0 25" fill="#f8a406" />
          <path d="M10 14q0-2.500 2.500-2.500H22q2 0 2.500 3v5H10z" fill="#ffdf9b" />
          <rect x="10" y="15" width="30" height="23.500" rx="3.500" fill="#fff" />
        </svg>
        <svg className="size-[49.5px]" viewBox="0 0 50 50">
          <path d="M0 25C0 5 5 0 25 0s25 5 25 25-5 25-25 25S0 45 0 25" fill="#e21158" />
          <rect x="9.500" y="13" width="31" height="24.500" rx="4" fill="#fff" />
          <circle cx="25" cy="25.500" r="6.500" fill="#d9075a" /><circle cx="34.800" cy="18.800" r="2.600" fill="#e21158" />
        </svg>
      </div>
      <svg className="ml-auto mr-[77px] h-[26px] w-[176px]" viewBox="1029 1998 176 26">
        <g fill="none" stroke="#5d5a5a" strokeWidth="2"><path d="M1031 1999v24M1041 1999v24M1051 1999v24" /><rect x="1108" y="2000" width="21.500" height="22" rx="6.500" /><path d="m1203 1999-11.500 12 11.500 12" /></g>
      </svg>
    </nav>
  );
}

function VolumeSlider() {
  return (
    <div className="absolute top-[861px] left-[1195px] flex h-[328px] w-[57px] flex-col items-center justify-between overflow-hidden rounded-full border border-[#707a9b] bg-linear-to-b from-[#6c718e] from-[59.7%] to-[#b45d61] to-[59.7%] shadow-[2px_5px_12px_#1a5cb2]">
      <div className="mt-[24px] flex gap-[4.3px]">
        <i className="size-[6.5px] rounded-full bg-white" /><i className="size-[6.5px] rounded-full bg-white" /><i className="size-[6.5px] rounded-full bg-white" />
      </div>
      <svg className="mb-[13px] ml-[2px] h-[28px] w-[34px]" viewBox="1208 1148 34 28" fill="none" stroke="#ffefe8" strokeWidth="2.600">
        <circle cx="1214.500" cy="1168.500" r="4.800" /><path d="M1219.500 1168v-16c8 0 11 8 6.500 16" />
        <path d="M1231 1152c5 4 5 14 0 18" stroke="#e4a9a7" strokeWidth="2" /><path d="M1237 1149c5 5 5 19 0 23" stroke="#c06c6e" strokeWidth="1.500" />
      </svg>
    </div>
  );
}

export default function App() {
  return (
    <div className="relative h-[2048px] w-[1281px] overflow-hidden bg-[#fdf9f8] font-[Roboto,sans-serif]">
      <StatusBar />
      <TabStrip />
      <Toolbar />
      <WeatherPage />
      <NavigationBar />
      <VolumeSlider />
      <div className="absolute top-[92px] left-[1229px] flex size-[60px] items-center justify-center rounded-full bg-[#777]/50">
        <svg className="mt-[2px] ml-[2px] size-[30px]" viewBox="0 0 32 32"><path d="m1 31 5-9L22 6l4 4-16 16zM24 4l2-2q4 0 4 4l-2 2z" fill="#fff" /></svg>
      </div>
    </div>
  );
}
